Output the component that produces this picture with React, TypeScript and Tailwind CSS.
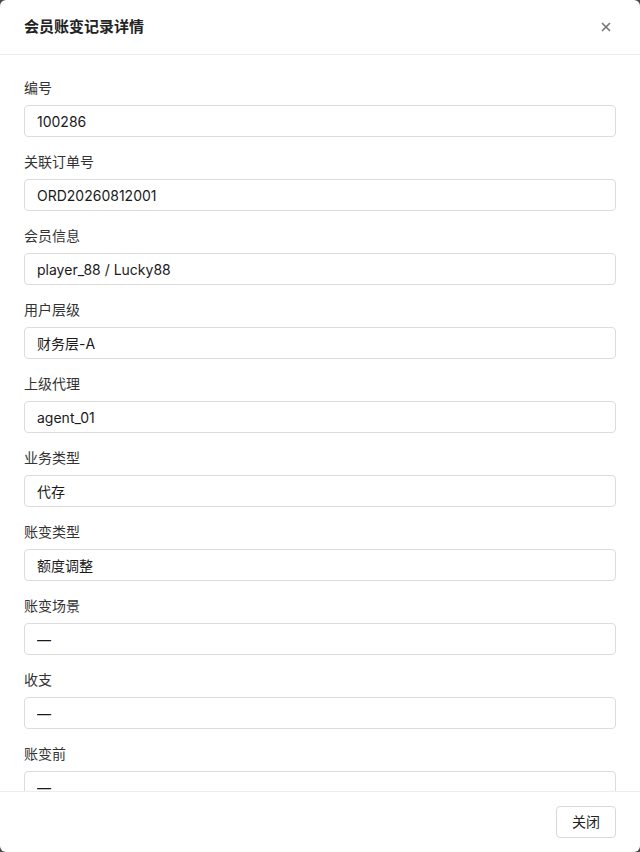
import React from 'react';
import { X } from 'lucide-react';

const FONT = 'font-["Inter","Noto_Sans_CJK_SC",sans-serif]';

// 账变记录字段
const FIELDS = [
  { label: '编号', value: '100286' },
  { label: '关联订单号', value: 'ORD20260812001' },
  { label: '会员信息', value: 'player_88 / Lucky88' },
  { label: '用户层级', value: '财务层-A' },
  { label: '上级代理', value: 'agent_01' },
  { label: '业务类型', value: '代存' },
  { label: '账变类型', value: '额度调整' },
  { label: '账变场景', value: '—' },
  { label: '收支', value: '—' },
  { label: '账变前', value: '—' },
];

export default function App() {
  return (
    <div className={`h-[852px] w-[640px] bg-[#4a4a4a] ${FONT}`}>
      <div className="flex h-full flex-col overflow-hidden rounded-md bg-white">
        <div className="flex h-[55px] shrink-0 items-center justify-between border-b border-[#ececec] px-6">
          <h2 className="text-[15px] font-semibold text-[#222]">会员账变记录详情</h2>
          <button className="flex h-5 w-5 items-center justify-center text-[#7a7a7a]">
            <X size={14} strokeWidth={3} />
          </button>
        </div>

        <div className="flex-1 overflow-hidden px-6 pt-[23px]">
          <div className="flex flex-col gap-[15px]">
            {FIELDS.map((f) => (
              <div key={f.label} className="flex flex-col gap-[7px]">
                <label className="text-sm leading-5 text-[#333]">{f.label}</label>
                <input
                  readOnly
                  value={f.value}
                  className="h-8 w-full rounded border border-[#dcdcdc] bg-white px-3 text-sm text-[#1a1a1a] outline-none"
                />
              </div>
            ))}
          </div>
        </div>

        <div className="flex h-[61px] shrink-0 items-center justify-end border-t border-[#ececec] px-6">
          <button className="h-8 rounded border border-[#d9d9d9] bg-white px-[15px] text-sm text-[#222]">
            关闭
          </button>
        </div>
      </div>
    </div>
  );
}
